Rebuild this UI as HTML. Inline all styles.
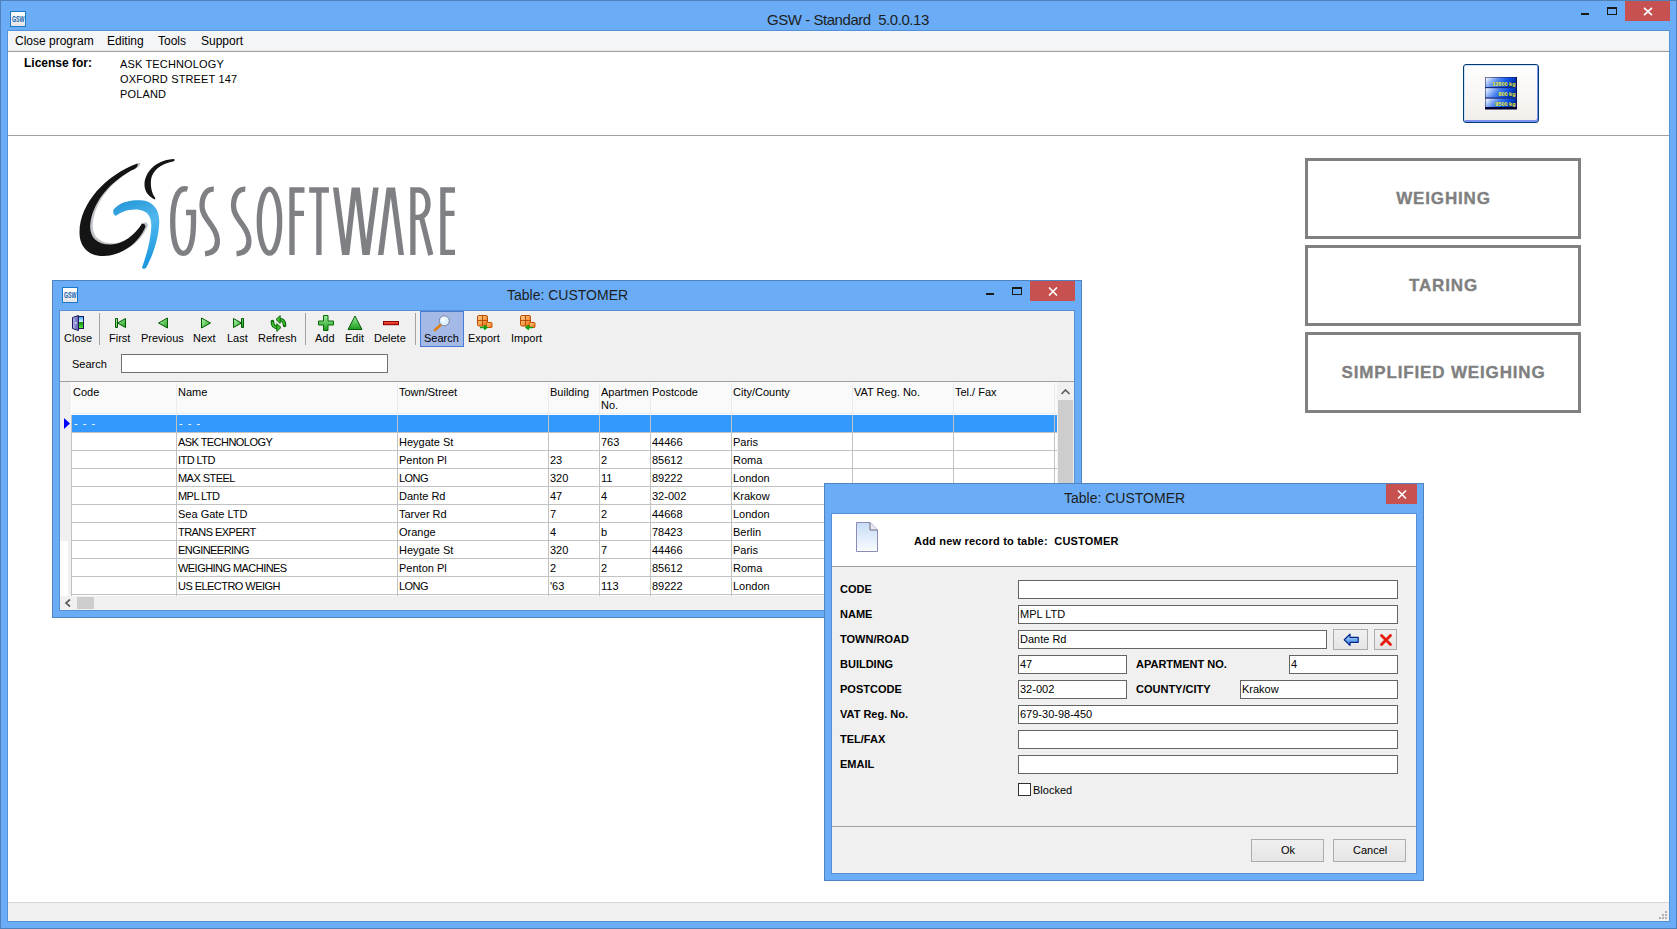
<!DOCTYPE html>
<html><head><meta charset="utf-8">
<style>
*{box-sizing:border-box;margin:0;padding:0}
html,body{width:1677px;height:929px;overflow:hidden;background:#fff;font-family:"Liberation Sans",sans-serif;color:#000}
.a{position:absolute}
.t{position:absolute;white-space:pre;line-height:1}
#main{left:0;top:0;width:1677px;height:929px;background:#6aacf5;border:1px solid #5080b8}
.cont{background:#fff}
.closebtn{background:#c75050}
.inp{position:absolute;background:#fff;border:1px solid #646464;height:19px}
.it{position:absolute;font-size:11px;white-space:pre;line-height:1}
.lbl{position:absolute;font-size:11px;font-weight:700;white-space:pre;line-height:1}
.hl{position:absolute;height:1px;background:#c2c2c2}
.vl{position:absolute;width:1px;background:#c2c2c2}
.gc{position:absolute;font-size:11px;white-space:pre;line-height:1}
.tb{position:absolute;font-size:11px;white-space:pre;line-height:1;color:#000}
.bigbtn{position:absolute;left:1305px;width:276px;height:81px;border:3px solid #808080;background:#fff;color:#7f7f7f;font-size:17px;font-weight:700;letter-spacing:0.85px;-webkit-text-stroke:0.35px #7f7f7f;display:flex;align-items:center;justify-content:center;padding-top:1px;padding-left:1px}
</style></head><body>
<div id="main" class="a"></div>
<!-- inner border lines of main -->
<div class="a" style="left:7px;top:30px;width:1663px;height:892px;border:1px solid #5290d8"></div>
<!-- title -->
<div class="a" style="left:10px;top:11px;width:16px;height:16px;background:linear-gradient(#fff,#e4e4e4);border:1px solid #1a7ac8"></div>
<svg class="a" style="left:0;top:0" width="40" height="40"><text x="12" y="22.2" font-family="Liberation Sans" font-size="8.2" font-weight="700" fill="#0f5fae" textLength="12.5" lengthAdjust="spacingAndGlyphs">GSW</text></svg>
<div class="t" style="left:767px;top:12px;font-size:15px;letter-spacing:-0.45px;color:#1e1e1e">GSW - Standard  5.0.0.13</div>
<!-- window buttons -->
<div class="a" style="left:1581px;top:13px;width:8px;height:2px;background:#1a1a1a"></div>
<div class="a" style="left:1607px;top:7px;width:10px;height:8px;border:1px solid #1a1a1a;border-top-width:2px"></div>
<div class="a closebtn" style="left:1625px;top:1px;width:45px;height:20px"></div>
<svg class="a" style="left:1643px;top:7px" width="10" height="9" viewBox="0 0 10 9"><path d="M1 0.8 L9 8.2 M9 0.8 L1 8.2" stroke="#fff" stroke-width="1.8"/></svg>
<!-- menu bar -->
<div class="a" style="left:8px;top:31px;width:1661px;height:21px;background:#f4f5f7;border-bottom:1px solid #a0a0a0"></div>
<div class="a" style="left:8px;top:50px;width:1661px;height:1px;background:#e8e9eb"></div>
<div class="t" style="left:15px;top:35px;font-size:12px">Close program</div>
<div class="t" style="left:107px;top:35px;font-size:12px">Editing</div>
<div class="t" style="left:158px;top:35px;font-size:12px">Tools</div>
<div class="t" style="left:201px;top:35px;font-size:12px">Support</div>
<!-- license area -->
<div class="a" style="left:8px;top:52px;width:1661px;height:850px;background:#fff"></div>
<div class="a" style="left:8px;top:135px;width:1661px;height:1px;background:#a0a0a0"></div>
<div class="t" style="left:24px;top:57px;font-size:12px;font-weight:700">License for:</div>
<div class="t" style="left:120px;top:57px;font-size:11px;line-height:15px;letter-spacing:0.15px">ASK TECHNOLOGY
OXFORD STREET 147
POLAND</div>
<!-- status bar -->
<div class="a" style="left:8px;top:902px;width:1661px;height:1px;background:#d7d7d7"></div>
<div class="a" style="left:8px;top:903px;width:1661px;height:18px;background:#f0f0f0"></div>
<!-- grip -->
<div class="a" style="left:1665px;top:911px;width:2px;height:2px;background:#b0b0b0;box-shadow:-3px 3px 0 #b0b0b0,0 3px 0 #b0b0b0,-6px 6px 0 #b0b0b0,-3px 6px 0 #b0b0b0,0 6px 0 #b0b0b0"></div>

<!-- top right icon button -->
<div class="a" style="left:1463px;top:64px;width:76px;height:59px;border:1px solid #003c74;border-radius:3px;background:linear-gradient(#fff,#f2efea);box-shadow:inset 1px 1px 0 #cfe2fb,inset -1px -2px 0 #7b91f0"></div>
<svg class="a" style="left:1484px;top:76px" width="35" height="35" viewBox="0 0 35 35"><defs><linearGradient id="kg" x1="0" y1="0" x2="1" y2="0.3"><stop offset="0" stop-color="#ffffff"/><stop offset="0.45" stop-color="#4f86f0"/><stop offset="0.75" stop-color="#0a50e8"/><stop offset="1" stop-color="#0030a0"/></linearGradient></defs>
<rect x="1" y="1" width="32" height="32" fill="#0a0a50"/>
<rect x="1.5" y="1.5" width="30.5" height="10" fill="url(#kg)"/>
<rect x="1.5" y="12" width="30.5" height="10" fill="url(#kg)"/>
<rect x="1.5" y="22.5" width="30.5" height="9" fill="url(#kg)"/>
<rect x="1" y="11" width="32" height="1.2" fill="#1a2a80"/>
<rect x="1" y="21.3" width="32" height="1" fill="#2a3a90"/>
<rect x="1" y="31" width="32" height="2.5" fill="#000030"/>
<g font-family="Liberation Sans" font-size="5.5" font-weight="700" fill="#f0f020" text-anchor="end"><text x="31.5" y="9.5">12800 kg</text><text x="31.5" y="19.5">800 kg</text><text x="31.5" y="29.5">9500 kg</text></g>
</svg>

<!-- big buttons -->
<div class="bigbtn" style="top:158px">WEIGHING</div>
<div class="bigbtn" style="top:245px">TARING</div>
<div class="bigbtn" style="top:332px">SIMPLIFIED WEIGHING</div>

<!--LOGO-->
<svg class="a" style="left:0;top:0" width="1677" height="929" viewBox="0 0 1677 929">
<defs>
<linearGradient id="blu" x1="0" y1="0" x2="0.3" y2="1"><stop offset="0" stop-color="#1f93d6"/><stop offset="0.5" stop-color="#52b8ee"/><stop offset="1" stop-color="#1f9ae0"/></linearGradient>
</defs>
<!-- black G swoosh shadow -->
<path transform="translate(2.6,-1.2)" d="M137.5 163.6 C106 175 80 203 79.5 232 C79.3 248 90 256.5 104 256 C122 255.5 139 243 145.5 226.5 C145 224 143.5 223 142 223.5 C135 235 123 244 111 244.5 C96 245 89 236 90.3 224 C92.5 204 107 184 131.5 170.2 C134.5 169.2 138.5 167 137.5 163.6 Z" fill="#c0c4c8"/>
<!-- black G swoosh -->
<path d="M137.5 163.6 C106 175 80 203 79.5 232 C79.3 248 90 256.5 104 256 C122 255.5 139 243 145.5 226.5 C145 224 143.5 223 142 223.5 C135 235 123 244 111 244.5 C96 245 89 236 90.3 224 C92.5 204 107 184 131.5 170.2 C134.5 169.2 138.5 167 137.5 163.6 Z" fill="#141414"/>
<!-- small top swoosh -->
<path d="M174 159 C158 159.5 146 170 144.5 183 C144 191 148 196 154.5 199.5 C155.5 199 155.5 198 155 197.5 C151.5 193 150.5 186 151 180 C152 171 160 164 173.8 161.2 C174.8 160.8 174.8 159.4 174 159 Z" fill="#141414"/>
<!-- blue swoosh -->
<path d="M113.5 209.5 C120 202 130 199.8 141 200.3 C153 201 160 210 159.2 223 C158.5 240 152.5 256 146 268 C145 269.2 142.5 269 142 267.5 C147 254 151 238 151.3 226 C151.6 215 146 210 137 209.5 C128 209 121 212 116.5 215.5 C114 216.5 112.5 212 113.5 209.5 Z" fill="url(#blu)"/>
<g fill="none" stroke="#7e8084" stroke-width="5.3">
<!-- G -->
<path d="M187.5 189.3 C177 185.5 172.7 203 172.7 221 C172.7 241 176.5 253.3 183.3 253.3 C190.5 253.3 193.5 240 193.5 221 V212.5 H186"/>
<!-- S -->
<path d="M213.8 189.2 C205.5 188.8 202 197 202 206 C202 214 207 219 211.5 225.5 C216 232 217.4 236 217.4 241 C217.4 249 213 253 205 253.8"/>
<path d="M245.3 189.2 C237 188.8 233.5 197 233.5 206 C233.5 214 238.5 219 243 225.5 C247.5 232 248.9 236 248.9 241 C248.9 249 244.5 253 236.5 253.8"/>
<!-- O -->
<ellipse cx="269.5" cy="221.2" rx="10.2" ry="32"/>
<!-- F -->
<path d="M292 255 V190 H304.5 M292 213.3 H304"/>
<!-- T -->
<path d="M309.2 190 H328.9 M318.9 190 V255"/>
<!-- E -->
<path d="M455 190 H442.9 V252.3 H455 M442.9 213.3 H454.5"/>
<!-- R -->
<path d="M412.9 255 V190 H418 C425 190 428 197 428 204 C428 212 424 217.3 418 217.3 H413 M421.5 217.3 L430.8 255"/>
</g>
<g clip-path="url(#lclip)">
<clipPath id="lclip"><rect x="300" y="187.4" width="200" height="67.6"/></clipPath>
<path d="M334.7 180 L345.8 262 L355.7 176 L366 262 L376.9 180 M379.8 262 L390.8 176 L402.2 262" fill="none" stroke="#7e8084" stroke-width="5.5" stroke-linejoin="miter"/>
</g>
</svg>
<!--/LOGO-->

<!--GRIDWIN-->
<div class="a" style="left:52px;top:280px;width:1030px;height:338px;background:#6aacf5;border:1px solid #4f84c0"></div>
<div class="a" style="left:59px;top:310px;width:1016px;height:301px;border:1px solid #5590d5"></div>
<div class="a" style="left:60px;top:311px;width:1014px;height:299px;background:#f0f0f0"></div>
<div class="a" style="left:62px;top:287px;width:16px;height:16px;background:linear-gradient(#fff,#e4e4e4);border:1px solid #1a7ac8"></div>
<svg class="a" style="left:52px;top:276px" width="40" height="40"><text x="12" y="22.2" font-family="Liberation Sans" font-size="8.2" font-weight="700" fill="#0f5fae" textLength="12.5" lengthAdjust="spacingAndGlyphs">GSW</text></svg>
<div class="t" style="left:507px;top:288px;font-size:14px;color:#1e1e1e">Table: CUSTOMER</div>
<div class="a" style="left:986px;top:293px;width:8px;height:2px;background:#1a1a1a"></div>
<div class="a" style="left:1012px;top:287px;width:10px;height:8px;border:1px solid #1a1a1a;border-top-width:2px"></div>
<div class="a closebtn" style="left:1030px;top:281px;width:45px;height:20px"></div>
<svg class="a" style="left:1048px;top:287px" width="10" height="9" viewBox="0 0 10 9"><path d="M1 0.5 L9 8.5 M9 0.5 L1 8.5" stroke="#fff" stroke-width="1.6"/></svg>
<div class="a" style="left:99px;top:313px;width:1px;height:32px;background:#a0a0a0"></div>
<div class="a" style="left:305px;top:313px;width:1px;height:32px;background:#a0a0a0"></div>
<div class="a" style="left:415px;top:313px;width:1px;height:32px;background:#a0a0a0"></div>
<div class="a" style="left:420px;top:311px;width:44px;height:36px;background:#a4b9e6;border:1px solid #4a7ad8"></div>
<div class="tb" style="left:64px;top:333px">Close</div>
<div class="tb" style="left:109px;top:333px">First</div>
<div class="tb" style="left:141px;top:333px">Previous</div>
<div class="tb" style="left:193px;top:333px">Next</div>
<div class="tb" style="left:227px;top:333px">Last</div>
<div class="tb" style="left:258px;top:333px">Refresh</div>
<div class="tb" style="left:315px;top:333px">Add</div>
<div class="tb" style="left:345px;top:333px">Edit</div>
<div class="tb" style="left:374px;top:333px">Delete</div>
<div class="tb" style="left:424px;top:333px">Search</div>
<div class="tb" style="left:468px;top:333px">Export</div>
<div class="tb" style="left:511px;top:333px">Import</div>
<!--TBICONS-->
<svg class="a" style="left:0;top:0" width="1677" height="929" viewBox="0 0 1677 929"><defs>
<linearGradient id="gg" x1="0" y1="0" x2="0" y2="1"><stop offset="0" stop-color="#9ef09e"/><stop offset="1" stop-color="#1a9a1a"/></linearGradient>
<linearGradient id="gg2" x1="0" y1="0" x2="1" y2="1"><stop offset="0" stop-color="#b8f8b0"/><stop offset="1" stop-color="#20a020"/></linearGradient>
<linearGradient id="door" x1="0" y1="0" x2="1" y2="0"><stop offset="0" stop-color="#b4b4f4"/><stop offset="1" stop-color="#5a5aa8"/></linearGradient>
<linearGradient id="sky" x1="0" y1="0" x2="0" y2="1"><stop offset="0" stop-color="#2aa8ff"/><stop offset="0.45" stop-color="#e0f4ff"/><stop offset="0.5" stop-color="#109010"/><stop offset="1" stop-color="#60f040"/></linearGradient>
<linearGradient id="red" x1="0" y1="0" x2="0" y2="1"><stop offset="0" stop-color="#ff6a50"/><stop offset="1" stop-color="#d01000"/></linearGradient>
<linearGradient id="org" x1="0" y1="0" x2="1" y2="1"><stop offset="0" stop-color="#ffd090"/><stop offset="1" stop-color="#f07010"/></linearGradient>
</defs><path d="M72.5 317.5 L78.5 315.5 V330.5 L72.5 328.5 Z" fill="url(#door)" stroke="#1e1a5a" stroke-width="1"/><rect x="78.5" y="316.5" width="5" height="12" fill="url(#sky)" stroke="#1e1a5a" stroke-width="1"/><rect x="75.5" y="322" width="1" height="2" fill="#fff"/><path d="M115.5 318.5 H117.5 V327.5 H115.5 Z M117.5 323 L125.5 318.5 V327.5 Z" fill="url(#gg2)" stroke="#005a00" stroke-width="1" stroke-linejoin="round"/><path d="M158.5 323 L167.5 318 V328 Z" fill="url(#gg2)" stroke="#005a00" stroke-width="1" stroke-linejoin="round"/><path d="M210.5 323 L201.5 318 V328 Z" fill="url(#gg2)" stroke="#005a00" stroke-width="1" stroke-linejoin="round"/><path d="M241.5 318.5 H243.5 V327.5 H241.5 Z M241.5 323 L233.5 318.5 V327.5 Z" fill="url(#gg2)" stroke="#005a00" stroke-width="1" stroke-linejoin="round"/><path d="M279 319.5 C282.5 319.5 284.6 321.5 284.6 325.5" stroke="#0a6a0a" stroke-width="3.6" fill="none" stroke-linecap="round"/><path d="M279 319.5 C282.5 319.5 284.6 321.5 284.6 325.3" stroke="#40c030" stroke-width="1.6" fill="none"/><path d="M276 319.5 L280.2 315.6 V323.4 Z" fill="#40c030" stroke="#0a6a0a" stroke-width="1" stroke-linejoin="round"/><g transform="rotate(180 278.5 323.5)"><path d="M279 319.5 C282.5 319.5 284.6 321.5 284.6 325.5" stroke="#0a6a0a" stroke-width="3.6" fill="none" stroke-linecap="round"/><path d="M279 319.5 C282.5 319.5 284.6 321.5 284.6 325.3" stroke="#40c030" stroke-width="1.6" fill="none"/><path d="M276 319.5 L280.2 315.6 V323.4 Z" fill="#40c030" stroke="#0a6a0a" stroke-width="1" stroke-linejoin="round"/></g><path d="M323.5 315.5 H328 V321 H333.5 V325 H328 V330.5 H323.5 V325 H318.5 V321 H323.5 Z" fill="url(#gg)" stroke="#0a6a0a" stroke-width="1"/><path d="M355 316 L362 329.5 H348 Z" fill="url(#gg)" stroke="#0a5a0a" stroke-width="1" stroke-linejoin="round"/><rect x="383.5" y="321.5" width="15" height="3.2" fill="url(#red)" stroke="#8a0000" stroke-width="1"/><line x1="435" y1="330" x2="440.5" y2="325" stroke="#e08010" stroke-width="2.6" stroke-linecap="round"/><circle cx="444.3" cy="320.8" r="5" fill="#dff4ff" stroke="#8080a0" stroke-width="1"/><circle cx="443" cy="319.5" r="2" fill="#fff"/><rect x="477.5" y="315.5" width="10" height="10.5" rx="1.5" fill="url(#org)" stroke="#c05000" stroke-width="1"/><path d="M477.5 320.5 H487.5 M482.5 315.5 V326" stroke="#a04000" stroke-width="0.8"/><rect x="486.5" y="322.5" width="5.5" height="5" rx="1" fill="url(#org)" stroke="#c05000" stroke-width="1"/><path d="M480 327.5 H486 M484 325.5 L486.8 327.5 L484 329.5" stroke="#10a010" stroke-width="1.6" fill="none"/><rect x="520.5" y="315.5" width="10" height="10.5" rx="1.5" fill="url(#org)" stroke="#c05000" stroke-width="1"/><path d="M520.5 320.5 H530.5 M525.5 315.5 V326" stroke="#a04000" stroke-width="0.8"/><rect x="529.5" y="322.5" width="5.5" height="5" rx="1" fill="url(#org)" stroke="#c05000" stroke-width="1"/><path d="M533 327.5 H527 M529 325.5 L526.2 327.5 L529 329.5" stroke="#10a010" stroke-width="1.6" fill="none"/></svg>
<!--/TBICONS-->
<div class="tb" style="left:72px;top:359px">Search</div>
<div class="inp" style="left:121px;top:354px;width:267px;height:19px;border-color:#707070"></div>
<div class="a" style="left:60px;top:381px;width:1014px;height:1px;background:#a0a0a0"></div>
<div class="a" style="left:60px;top:382px;width:998px;height:214px;background:#fff"></div>
<div class="a" style="left:60px;top:382px;width:11px;height:214px;background:#f0f0f0"></div>
<div class="a" style="left:72px;top:382px;width:985px;height:31px;background:#fafafa"></div>
<div class="a" style="left:60px;top:541px;width:8px;height:55px;background:#fff"></div>
<div class="a" style="left:72px;top:413px;width:985px;height:1px;background:#e8eef6"></div>
<div class="a" style="left:176px;top:383px;width:1px;height:30px;background:#e8ecf2"></div>
<div class="a" style="left:397px;top:383px;width:1px;height:30px;background:#e8ecf2"></div>
<div class="a" style="left:548px;top:383px;width:1px;height:30px;background:#e8ecf2"></div>
<div class="a" style="left:599px;top:383px;width:1px;height:30px;background:#e8ecf2"></div>
<div class="a" style="left:650px;top:383px;width:1px;height:30px;background:#e8ecf2"></div>
<div class="a" style="left:731px;top:383px;width:1px;height:30px;background:#e8ecf2"></div>
<div class="a" style="left:852px;top:383px;width:1px;height:30px;background:#e8ecf2"></div>
<div class="a" style="left:953px;top:383px;width:1px;height:30px;background:#e8ecf2"></div>
<div class="a" style="left:1054px;top:383px;width:1px;height:30px;background:#e8ecf2"></div>
<div class="gc" style="left:73px;top:386px;line-height:13px">Code</div>
<div class="gc" style="left:178px;top:386px;line-height:13px">Name</div>
<div class="gc" style="left:399px;top:386px;line-height:13px">Town/Street</div>
<div class="gc" style="left:550px;top:386px;line-height:13px">Building</div>
<div class="gc" style="left:601px;top:386px;line-height:13px">Apartmen
No.</div>
<div class="gc" style="left:652px;top:386px;line-height:13px">Postcode</div>
<div class="gc" style="left:733px;top:386px;line-height:13px">City/County</div>
<div class="gc" style="left:854px;top:386px;line-height:13px">VAT Reg. No.</div>
<div class="gc" style="left:955px;top:386px;line-height:13px">Tel./ Fax</div>
<div class="a" style="left:72px;top:415px;width:985px;height:17px;background:#3399ff"></div>
<svg class="a" style="left:63px;top:417px" width="8" height="13" viewBox="0 0 8 13"><path d="M1 1 L7 6.5 L1 12 Z" fill="#0000ff"/></svg>
<div class="gc" style="left:74px;top:418px;color:#fff;letter-spacing:1px">- - -</div>
<div class="gc" style="left:179px;top:418px;color:#fff;letter-spacing:1px">- - -</div>
<div class="hl" style="left:71px;top:432px;width:986px"></div>
<div class="hl" style="left:71px;top:450px;width:986px"></div>
<div class="hl" style="left:71px;top:468px;width:986px"></div>
<div class="hl" style="left:71px;top:486px;width:986px"></div>
<div class="hl" style="left:71px;top:504px;width:986px"></div>
<div class="hl" style="left:71px;top:522px;width:986px"></div>
<div class="hl" style="left:71px;top:540px;width:986px"></div>
<div class="hl" style="left:71px;top:558px;width:986px"></div>
<div class="hl" style="left:71px;top:576px;width:986px"></div>
<div class="hl" style="left:71px;top:594px;width:986px"></div>
<div class="vl" style="left:71px;top:415px;height:181px"></div>
<div class="vl" style="left:176px;top:415px;height:181px"></div>
<div class="vl" style="left:397px;top:415px;height:181px"></div>
<div class="vl" style="left:548px;top:415px;height:181px"></div>
<div class="vl" style="left:599px;top:415px;height:181px"></div>
<div class="vl" style="left:650px;top:415px;height:181px"></div>
<div class="vl" style="left:731px;top:415px;height:181px"></div>
<div class="vl" style="left:852px;top:415px;height:181px"></div>
<div class="vl" style="left:953px;top:415px;height:181px"></div>
<div class="vl" style="left:1054px;top:415px;height:181px"></div>
<div class="gc" style="left:178px;top:437px;letter-spacing:-0.55px">ASK TECHNOLOGY</div>
<div class="gc" style="left:399px;top:437px">Heygate St</div>
<div class="gc" style="left:601px;top:437px">763</div>
<div class="gc" style="left:652px;top:437px">44466</div>
<div class="gc" style="left:733px;top:437px">Paris</div>
<div class="gc" style="left:178px;top:455px;letter-spacing:-0.55px">ITD LTD</div>
<div class="gc" style="left:399px;top:455px">Penton Pl</div>
<div class="gc" style="left:550px;top:455px">23</div>
<div class="gc" style="left:601px;top:455px">2</div>
<div class="gc" style="left:652px;top:455px">85612</div>
<div class="gc" style="left:733px;top:455px">Roma</div>
<div class="gc" style="left:178px;top:473px;letter-spacing:-0.55px">MAX STEEL</div>
<div class="gc" style="left:399px;top:473px;letter-spacing:-0.55px">LONG</div>
<div class="gc" style="left:550px;top:473px">320</div>
<div class="gc" style="left:601px;top:473px">11</div>
<div class="gc" style="left:652px;top:473px">89222</div>
<div class="gc" style="left:733px;top:473px">London</div>
<div class="gc" style="left:178px;top:491px;letter-spacing:-0.55px">MPL LTD</div>
<div class="gc" style="left:399px;top:491px">Dante Rd</div>
<div class="gc" style="left:550px;top:491px">47</div>
<div class="gc" style="left:601px;top:491px">4</div>
<div class="gc" style="left:652px;top:491px">32-002</div>
<div class="gc" style="left:733px;top:491px">Krakow</div>
<div class="gc" style="left:178px;top:509px">Sea Gate LTD</div>
<div class="gc" style="left:399px;top:509px">Tarver Rd</div>
<div class="gc" style="left:550px;top:509px">7</div>
<div class="gc" style="left:601px;top:509px">2</div>
<div class="gc" style="left:652px;top:509px">44668</div>
<div class="gc" style="left:733px;top:509px">London</div>
<div class="gc" style="left:178px;top:527px;letter-spacing:-0.55px">TRANS EXPERT</div>
<div class="gc" style="left:399px;top:527px">Orange</div>
<div class="gc" style="left:550px;top:527px">4</div>
<div class="gc" style="left:601px;top:527px">b</div>
<div class="gc" style="left:652px;top:527px">78423</div>
<div class="gc" style="left:733px;top:527px">Berlin</div>
<div class="gc" style="left:178px;top:545px;letter-spacing:-0.55px">ENGINEERING</div>
<div class="gc" style="left:399px;top:545px">Heygate St</div>
<div class="gc" style="left:550px;top:545px">320</div>
<div class="gc" style="left:601px;top:545px">7</div>
<div class="gc" style="left:652px;top:545px">44466</div>
<div class="gc" style="left:733px;top:545px">Paris</div>
<div class="gc" style="left:178px;top:563px;letter-spacing:-0.55px">WEIGHING MACHINES</div>
<div class="gc" style="left:399px;top:563px">Penton Pl</div>
<div class="gc" style="left:550px;top:563px">2</div>
<div class="gc" style="left:601px;top:563px">2</div>
<div class="gc" style="left:652px;top:563px">85612</div>
<div class="gc" style="left:733px;top:563px">Roma</div>
<div class="gc" style="left:178px;top:581px;letter-spacing:-0.55px">US ELECTRO WEIGH</div>
<div class="gc" style="left:399px;top:581px;letter-spacing:-0.55px">LONG</div>
<div class="gc" style="left:550px;top:581px">'63</div>
<div class="gc" style="left:601px;top:581px">113</div>
<div class="gc" style="left:652px;top:581px">89222</div>
<div class="gc" style="left:733px;top:581px">London</div>
<div class="a" style="left:1057px;top:382px;width:17px;height:214px;background:#f0f0f0"></div>
<div class="a" style="left:1058px;top:400px;width:15px;height:196px;background:#cdcdcd"></div>
<svg class="a" style="left:1060px;top:388px" width="11" height="8" viewBox="0 0 11 8"><path d="M1.5 6 L5.5 2 L9.5 6" stroke="#606060" stroke-width="1.7" fill="none"/></svg>
<div class="a" style="left:60px;top:596px;width:998px;height:14px;background:#f0f0f0"></div>
<div class="a" style="left:77px;top:597px;width:17px;height:12px;background:#cdcdcd"></div>
<svg class="a" style="left:64px;top:598px" width="8" height="10" viewBox="0 0 8 10"><path d="M6 1.5 L2 5 L6 8.5" stroke="#606060" stroke-width="1.7" fill="none"/></svg>
<!--DIALOG-->
<div class="a" style="left:824px;top:483px;width:600px;height:398px;background:#6aacf5;border:1px solid #4f84c0"></div>
<div class="a" style="left:831px;top:513px;width:586px;height:361px;border:1px solid #5590d5"></div>
<div class="a" style="left:832px;top:514px;width:584px;height:52px;background:#fff"></div>
<div class="a" style="left:832px;top:566px;width:584px;height:1px;background:#a0a0a0"></div>
<div class="a" style="left:832px;top:567px;width:584px;height:306px;background:#f0f0f0"></div>
<div class="a" style="left:832px;top:826px;width:584px;height:1px;background:#a0a0a0"></div>
<div class="t" style="left:1064px;top:491px;font-size:14px;color:#1e1e1e">Table: CUSTOMER</div>
<div class="a closebtn" style="left:1386px;top:484px;width:31px;height:20px"></div>
<svg class="a" style="left:1397px;top:490px" width="10" height="9" viewBox="0 0 10 9"><path d="M1 0.5 L9 8.5 M9 0.5 L1 8.5" stroke="#fff" stroke-width="1.6"/></svg>
<svg class="a" style="left:855px;top:521px" width="24" height="32" viewBox="0 0 24 32"><defs><linearGradient id="dg" x1="0" y1="0" x2="0" y2="1"><stop offset="0" stop-color="#c5dcf6"/><stop offset="1" stop-color="#fafcff"/></linearGradient></defs><path d="M1.5 1.5 H15 L22.5 9 V30.5 H1.5 Z" fill="url(#dg)" stroke="#8c8cb4" stroke-width="1"/><path d="M15 1.5 V9 H22.5" fill="#e8e8f0" stroke="#6a6a80" stroke-width="1"/></svg>
<div class="t" style="left:914px;top:536px;font-size:11px;font-weight:700;letter-spacing:0.2px">Add new record to table:  CUSTOMER</div>
<div class="lbl" style="left:840px;top:584px">CODE</div>
<div class="lbl" style="left:840px;top:609px">NAME</div>
<div class="lbl" style="left:840px;top:634px">TOWN/ROAD</div>
<div class="lbl" style="left:840px;top:659px">BUILDING</div>
<div class="lbl" style="left:840px;top:684px">POSTCODE</div>
<div class="lbl" style="left:840px;top:709px">VAT Reg. No.</div>
<div class="lbl" style="left:840px;top:734px">TEL/FAX</div>
<div class="lbl" style="left:840px;top:759px">EMAIL</div>
<div class="lbl" style="left:1136px;top:659px">APARTMENT NO.</div>
<div class="lbl" style="left:1136px;top:684px">COUNTY/CITY</div>
<div class="inp" style="left:1018px;top:580px;width:380px"></div>
<div class="inp" style="left:1018px;top:605px;width:380px"></div>
<div class="it" style="left:1020px;top:609px">MPL LTD</div>
<div class="inp" style="left:1018px;top:630px;width:309px"></div>
<div class="it" style="left:1020px;top:634px">Dante Rd</div>
<div class="inp" style="left:1018px;top:655px;width:109px"></div>
<div class="it" style="left:1020px;top:659px">47</div>
<div class="inp" style="left:1289px;top:655px;width:109px"></div>
<div class="it" style="left:1291px;top:659px">4</div>
<div class="inp" style="left:1018px;top:680px;width:109px"></div>
<div class="it" style="left:1020px;top:684px">32-002</div>
<div class="inp" style="left:1240px;top:680px;width:158px"></div>
<div class="it" style="left:1242px;top:684px">Krakow</div>
<div class="inp" style="left:1018px;top:705px;width:380px"></div>
<div class="it" style="left:1020px;top:709px">679-30-98-450</div>
<div class="inp" style="left:1018px;top:730px;width:380px"></div>
<div class="inp" style="left:1018px;top:755px;width:380px"></div>
<div class="a" style="left:1333px;top:629px;width:35px;height:21px;background:linear-gradient(#f0f0f0,#e5e5e5);border:1px solid #acacac"></div>
<svg class="a" style="left:1343px;top:633px" width="17" height="14" viewBox="0 0 17 14"><defs><linearGradient id="ag" x1="0" y1="0" x2="0" y2="1"><stop offset="0" stop-color="#bfe0ff"/><stop offset="1" stop-color="#2a7ae0"/></linearGradient></defs><path d="M1.2 6.8 L7 1.2 V4.3 H15.2 V9.3 H7 V12.4 Z" fill="url(#ag)" stroke="#00288a" stroke-width="1.2" stroke-linejoin="round"/></svg>
<div class="a" style="left:1374px;top:629px;width:23px;height:21px;background:linear-gradient(#f0f0f0,#e5e5e5);border:1px solid #acacac"></div>
<svg class="a" style="left:1379px;top:633px" width="14" height="14" viewBox="0 0 14 14"><path d="M2.5 2.5 L11.5 11.5 M11.5 2.5 L2.5 11.5" stroke="#e8180c" stroke-width="2.8" stroke-linecap="round"/></svg>
<div class="a" style="left:1018px;top:783px;width:13px;height:13px;background:#fff;border:1px solid #333"></div>
<div class="it" style="left:1033px;top:785px">Blocked</div>
<div class="a" style="left:1251px;top:839px;width:73px;height:23px;background:linear-gradient(#f0f0f0,#e5e5e5);border:1px solid #acacac"></div>
<div class="it" style="left:1281px;top:845px">Ok</div>
<div class="a" style="left:1333px;top:839px;width:73px;height:23px;background:linear-gradient(#f0f0f0,#e5e5e5);border:1px solid #acacac"></div>
<div class="it" style="left:1353px;top:845px">Cancel</div>
</body></html>
